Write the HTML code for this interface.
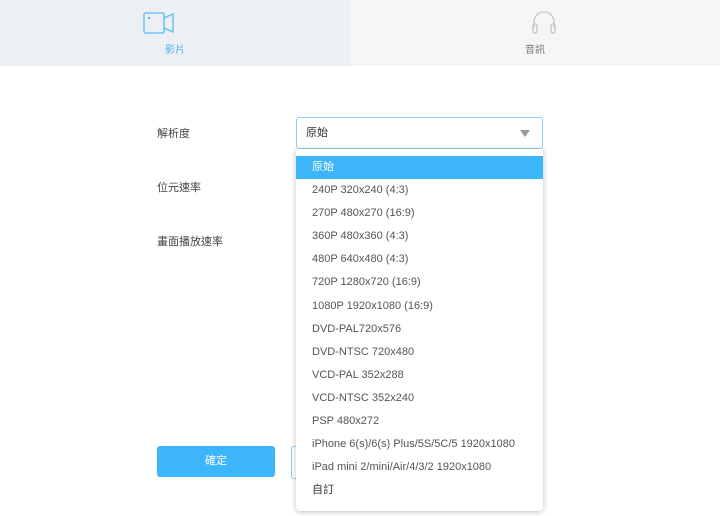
<!DOCTYPE html>
<html><head><meta charset="utf-8"><style>
body{margin:0;width:720px;height:516px;background:#fff;font-family:"Liberation Sans","Noto Sans CJK TC",sans-serif;position:relative;overflow:hidden}
.tab{position:absolute;top:0;height:66px;text-align:center;font-size:10px}
.lbl{position:absolute;left:157px;font-size:11px;color:#444}
.dd{position:absolute;left:296px;top:149px;width:247px;height:362px;background:#fff;box-shadow:0 1px 6px rgba(0,0,0,.25);border-radius:0 0 4px 4px}
.it{position:absolute;left:0;width:247px;height:23px;line-height:23px;font-size:11px;color:#555;padding-left:16px;box-sizing:border-box}
</style></head><body>
<div class="tab" style="left:0;width:350px;background:#eceff3">
<svg style="position:absolute;left:143px;top:12px" width="32" height="22" viewBox="0 0 32 22"><rect x="1" y="1" width="20" height="20" rx="1.5" fill="none" stroke="#5bbcf5" stroke-width="1.3"/><path d="M21 6 L30 2 V20 L21 16" fill="none" stroke="#5bbcf5" stroke-width="1.3"/><circle cx="6" cy="6" r="1.2" fill="#5bbcf5"/></svg>
<div style="position:absolute;left:0;width:350px;top:41px;color:#4ab2f2">影片</div></div>
<div class="tab" style="left:350px;width:370px;background:#f4f6f8">
<svg style="position:absolute;left:180px;top:10px" width="28" height="26" viewBox="0 0 28 26"><path d="M4 18 V12 A10 10 0 0 1 24 12 V18" fill="none" stroke="#c4c4c4" stroke-width="1.3"/><rect x="3" y="14" width="4" height="9" rx="2" fill="none" stroke="#c4c4c4" stroke-width="1.3"/><rect x="21" y="14" width="4" height="9" rx="2" fill="none" stroke="#c4c4c4" stroke-width="1.3"/></svg>
<div style="position:absolute;left:0;width:370px;top:41px;color:#777">音訊</div></div>
<div class="lbl" style="top:125px">解析度</div>
<div class="lbl" style="top:179px">位元速率</div>
<div class="lbl" style="top:233px">畫面播放速率</div>
<div style="position:absolute;left:296px;top:117px;height:30px;border:1px solid #8fd0f8;border-radius:3px;font-size:11px;color:#333;line-height:30px;padding-left:9px;box-sizing:content-box;width:236px">原始<div style="position:absolute;right:12px;top:12px;border-left:5px solid transparent;border-right:5px solid transparent;border-top:7px solid #999"></div></div>
<div style="position:absolute;left:157px;top:446px;width:118px;height:31px;background:#3db5fa;border-radius:3px;color:#fff;font-size:11px;text-align:center;line-height:31px">確定</div>
<div style="position:absolute;left:291px;top:446px;width:30px;height:31px;border:1px solid #8fd0f8;border-radius:3px"></div>
<div class="dd">
<div class="it" style="top:7px;background:#3db5fa;color:#fff">原始</div>
<div class="it" style="top:30px">240P 320x240 (4:3)</div>
<div class="it" style="top:53px">270P 480x270 (16:9)</div>
<div class="it" style="top:76px">360P 480x360 (4:3)</div>
<div class="it" style="top:99px">480P 640x480 (4:3)</div>
<div class="it" style="top:122px">720P 1280x720 (16:9)</div>
<div class="it" style="top:146px">1080P 1920x1080 (16:9)</div>
<div class="it" style="top:169px">DVD-PAL720x576</div>
<div class="it" style="top:192px">DVD-NTSC 720x480</div>
<div class="it" style="top:215px">VCD-PAL 352x288</div>
<div class="it" style="top:238px">VCD-NTSC 352x240</div>
<div class="it" style="top:261px">PSP 480x272</div>
<div class="it" style="top:284px">iPhone 6(s)/6(s) Plus/5S/5C/5 1920x1080</div>
<div class="it" style="top:307px">iPad mini 2/mini/Air/4/3/2 1920x1080</div>
<div class="it" style="top:330px;color:#333">自訂</div>
</div>
</body></html>
